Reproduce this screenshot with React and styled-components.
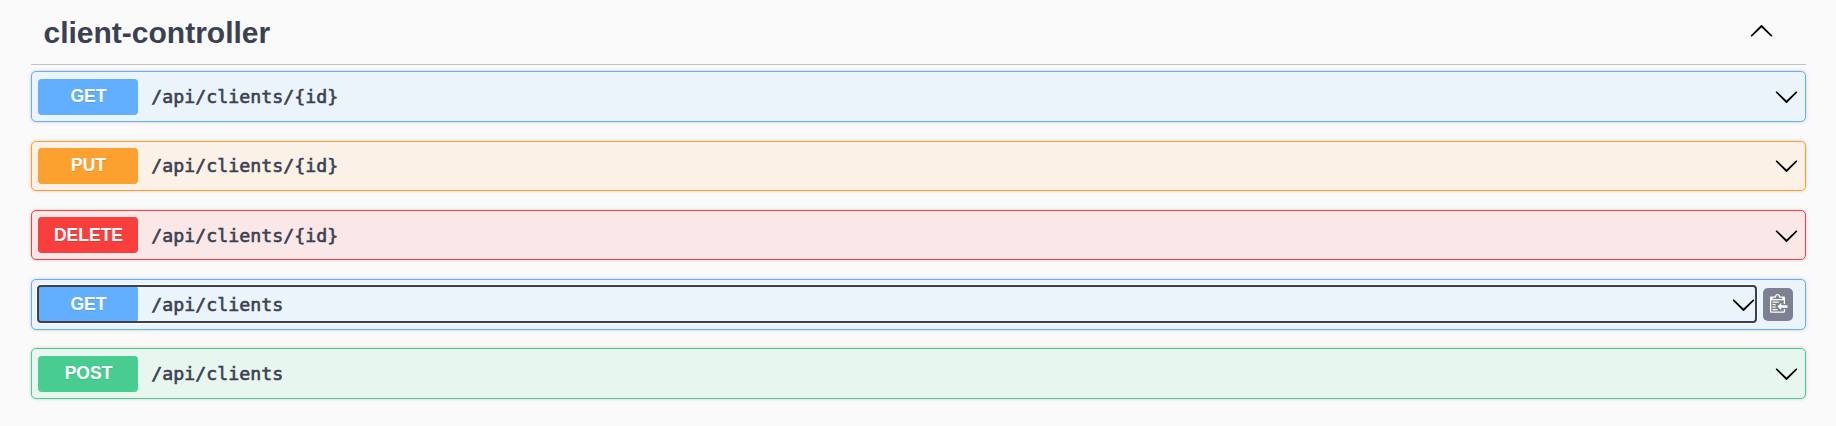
import React from "react";
import styled, { createGlobalStyle, css } from "styled-components";

const GlobalStyle = createGlobalStyle`
  *, *::before, *::after { box-sizing: border-box; }
  body {
    margin: 0;
    background: #fafafa;
    color: #3b4151;
    font-family: "Liberation Sans", Arial, sans-serif;
  }
`;

const methodColors = {
  GET: { main: "#61affe", tint: "#ebf3fb" },
  PUT: { main: "#fca130", tint: "#fbf1e6" },
  DELETE: { main: "#f93e3e", tint: "#fae7e7" },
  POST: { main: "#49cc90", tint: "#e8f6f0" },
};

const Section = styled.section`
  padding: 0 30px 0 31px;
`;

const TagHeader = styled.header`
  display: flex;
  align-items: center;
  height: 65px;
  margin-bottom: 6.4px;
  padding: 0 32px 2px 12.5px;
  border-bottom: 1px solid rgba(59, 65, 81, 0.3);
`;

const TagTitle = styled.h3`
  flex: 1;
  margin: 0;
  padding-top: 4px;
  font-size: 30px;
  line-height: 34px;
  font-weight: 700;
`;

const Operation = styled.div`
  display: flex;
  align-items: center;
  height: 50.5px;
  margin-bottom: 18.75px;
  padding: 6.25px;
  border: 1px solid ${(p) => methodColors[p.$method].main};
  border-radius: 5px;
  background: ${(p) => methodColors[p.$method].tint};
  box-shadow: 0 0 3.75px rgba(0, 0, 0, 0.19);
`;

const SummaryButton = styled.button`
  display: flex;
  flex: 1;
  align-items: center;
  height: 36px;
  padding: 0;
  border: 0;
  background: transparent;
  color: inherit;
  text-align: left;
  ${(p) =>
    p.$focused &&
    css`
      border-radius: 3px;
      outline: 2px solid #3b4151;
      outline-offset: -1px;
      box-shadow: 0 0 0 2px #fff;
    `}
`;

const MethodBadge = styled.span`
  width: 100px;
  height: 36px;
  padding: 0.5px 0 0 0.5px;
  border-radius: 3.75px;
  background: ${(p) => methodColors[p.$method].main};
  color: #fff;
  font: 700 17.5px/34px "Liberation Sans", Arial, sans-serif;
  text-align: center;
  text-shadow: 0 1px 0 rgba(0, 0, 0, 0.1);
`;

const Path = styled.span`
  flex: 1;
  padding: 1px 12.5px 0 13px;
  font: 400 18.27px/24px "DejaVu Sans Mono", monospace;
  -webkit-text-stroke: 0.6px #3b4151;
`;

const ArrowIcon = styled.svg`
  display: block;
  flex: none;
  width: 25px;
  height: 25px;
  fill: #000;
  transform: ${(p) => (p.$up ? "rotate(180deg)" : "none")};
`;

const CopyButton = styled.button`
  display: flex;
  align-items: center;
  justify-content: center;
  width: 30px;
  height: 33px;
  margin: 0 5.75px 0 7px;
  padding: 0 0 1.5px 1.5px;
  border: 0;
  border-radius: 5px;
  background: #7d8293;
`;

const Arrow = ({ up }) => (
  <ArrowIcon viewBox="0 0 20 20" $up={up} aria-hidden="true">
    <path d="M17.418 6.109c.272-.268.709-.268.979 0s.271.701 0 .969l-7.908 7.83c-.27.268-.707.268-.979 0l-7.908-7.83c-.27-.268-.27-.701 0-.969s.709-.268.979 0L10 13.25z" />
  </ArrowIcon>
);

const CopyIcon = () => (
  <svg width="17.5" height="18.75" viewBox="0 1 14 15" aria-hidden="true">
    <path
      fill="#fff"
      fillRule="evenodd"
      d="M2 13h4v1H2v-1zm5-6H2v1h5V7zm2 3V8l-3 3 3 3v-2h5v-2H9zM4.5 9H2v1h2.5V9zM2 12h2.5v-1H2v1zm9 1h1v2c-.02.28-.11.52-.3.7-.19.18-.42.28-.7.3H1c-.55 0-1-.45-1-1V4c0-.55.45-1 1-1h3c0-1.11.89-2 2-2 1.11 0 2 .89 2 2h3c.55 0 1 .45 1 1v5h-1V6H1v9h10v-2zM2 5h8c0-.55-.45-1-1-1H8c-.55 0-1-.45-1-1s-.45-1-1-1-1 .45-1 1-.45 1-1 1H3c-.55 0-1 .45-1 1z"
    />
  </svg>
);

const operations = [
  { method: "GET", path: "/api/clients/{id}" },
  { method: "PUT", path: "/api/clients/{id}" },
  { method: "DELETE", path: "/api/clients/{id}" },
  { method: "GET", path: "/api/clients", focused: true },
  { method: "POST", path: "/api/clients" },
];

export default function App() {
  return (
    <>
      <GlobalStyle />
      <Section>
        <TagHeader>
          <TagTitle>client-controller</TagTitle>
          <Arrow up />
        </TagHeader>
        {operations.map(({ method, path, focused }) => (
          <Operation key={method + path} $method={method}>
            <SummaryButton $focused={focused}>
              <MethodBadge $method={method}>{method}</MethodBadge>
              <Path>{path}</Path>
              <Arrow />
            </SummaryButton>
            {focused && (
              <CopyButton aria-label="Copy to clipboard">
                <CopyIcon />
              </CopyButton>
            )}
          </Operation>
        ))}
      </Section>
    </>
  );
}
